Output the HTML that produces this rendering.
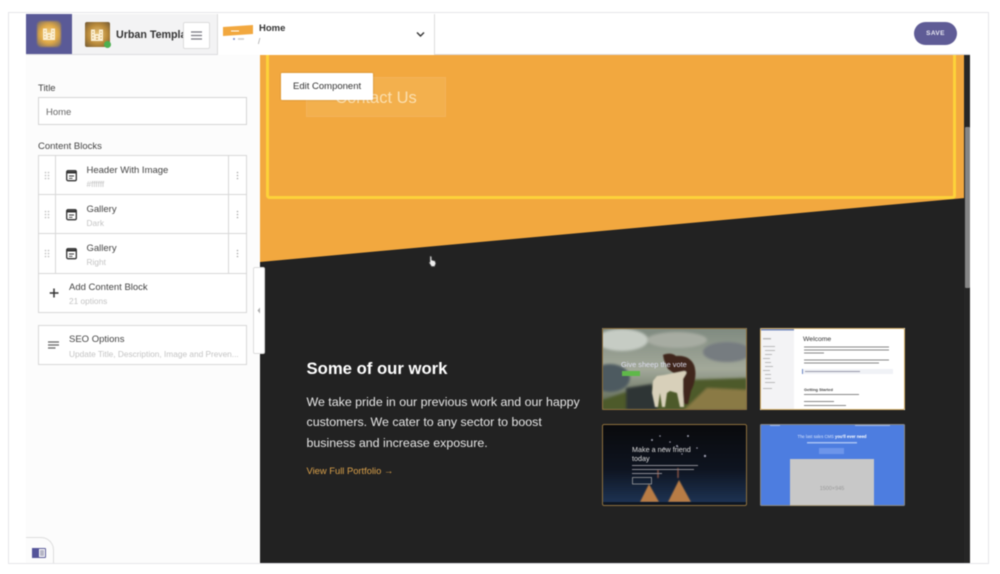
<!DOCTYPE html>
<html><head><meta charset="utf-8">
<style>
*{box-sizing:border-box}
html,body{margin:0;padding:0;width:1000px;height:574px;overflow:hidden;background:#fff;font-family:"Liberation Sans",sans-serif;color:#333}
.a{position:absolute}
.t{position:absolute;white-space:nowrap}
.sub{color:#c4c4c4;font-size:8.3px;margin-top:.5px}
.lab{color:#444;font-size:9.5px;margin-top:.7px}
.row{position:absolute;background:#fff;border:1px solid #d8d8d8}
</style></head><body>
<div class="a" style="left:0;top:0;width:1000px;height:574px;filter:blur(.4px)">
<!-- frame -->
<div class="a" style="left:8px;top:12px;width:981px;height:552px;border:1.500px solid #e6e6ea;background:#fff"></div>
<!-- sidebar -->
<div class="a" style="left:26px;top:55px;width:234px;height:508px;background:#fcfcfc"></div>
<!-- topbar -->
<div class="a" style="left:72px;top:14px;width:146px;height:41px;background:#f3f3f4"></div>
<div class="a" style="left:26px;top:14px;width:46px;height:41px;background:#5a5a97"></div>
<div class="a" style="left:26px;top:54px;width:944px;height:1px;background:#dcdce0"></div>
<div class="a" style="left:37px;top:21px;width:24px;height:26px;background:radial-gradient(circle,#f3d592 0,#e0a946 50%,#8f7a60 85%,#5a5a97 100%);border-radius:4px;filter:blur(.8px)"></div>
<svg class="a" style="left:42px;top:27px" width="15" height="14" viewBox="0 0 15 14"><path d="M1 13V1.500h4V6h4V1.500h4V13z" fill="#fbeed0"/><path d="M2.500 4h1M2.500 7h1M2.500 10h1M10.500 4h1M10.500 7h1M10.500 10h1M6 8.500h2M6 11h2" stroke="#d8a850" stroke-width="1"/></svg>
<div class="a" style="left:85px;top:22px;width:25px;height:25px;background:radial-gradient(circle,#ecc97f 0,#b98a3a 55%,#6f5836 100%);border-radius:2px"></div>
<svg class="a" style="left:90px;top:28px" width="15" height="14" viewBox="0 0 15 14"><path d="M1 13V1.500h4V6h4V1.500h4V13z" fill="#fbeed0"/><path d="M2.500 4h1M2.500 7h1M2.500 10h1M10.500 4h1M10.500 7h1M10.500 10h1M6 8.500h2M6 11h2" stroke="#c49440" stroke-width="1"/></svg>
<div class="a" style="left:104px;top:41px;width:7px;height:7px;border-radius:50%;background:#4caf50"></div>
<div class="t" style="left:116px;top:28px;width:68px;overflow:hidden;font-size:10.700px;font-weight:bold;color:#333;line-height:14px">Urban Template</div>
<div class="a" style="left:183px;top:22px;width:27px;height:27px;background:#fff;border:1px solid #ddd;border-radius:2px"></div>
<svg class="a" style="left:191px;top:31px" width="12" height="10"><path d="M0 1h11M0 4.500h11M0 8h11" stroke="#77777f" stroke-width="1.300"/></svg>
<div class="a" style="left:217px;top:14px;width:218px;height:41px;background:#fff;border-left:1px solid #ddd;border-right:1px solid #ddd"></div>
<svg class="a" style="left:223px;top:25px" width="31" height="17"><path d="M0 2L30 0V9L0 11z" fill="#f2a83f"/><path d="M8 6h8" stroke="#fff" stroke-width="1"/><circle cx="11" cy="14" r="1" fill="#7a8cc8"/><path d="M15 14h6" stroke="#ccc" stroke-width="1.500"/></svg>
<div class="t" style="left:259px;top:23px;font-size:9.500px;font-weight:bold;color:#333;line-height:12px">Home</div>
<div class="t" style="left:258px;top:37px;font-size:8px;color:#999;line-height:10px">/</div>
<svg class="a" style="left:416px;top:31px" width="9" height="7"><path d="M1 1.500l3.500 3.500L8 1.500" stroke="#333" stroke-width="1.400" fill="none"/></svg>
<div class="a" style="left:914px;top:22px;width:43px;height:23px;background:#5f5c96;border-radius:12px"></div>
<div class="t" style="left:914px;top:22px;width:43px;text-align:center;font-size:6.5px;font-weight:bold;color:#e8e8f2;line-height:23px;letter-spacing:.4px">SAVE</div>

<!-- form -->
<div class="t lab" style="left:38px;top:82px;line-height:12px">Title</div>
<div class="a" style="left:38px;top:97px;width:209px;height:28px;background:#fff;border:1px solid #d5d5d5"></div>
<div class="t lab" style="left:46px;top:106px;line-height:12px;color:#666">Home</div>
<div class="t lab" style="left:38px;top:140px;line-height:12px">Content Blocks</div>

<div class="row" style="left:38px;top:155px;width:209px;height:40px"></div>
<div class="row" style="left:38px;top:194px;width:209px;height:40px"></div>
<div class="row" style="left:38px;top:233px;width:209px;height:41px"></div>
<div class="a" style="left:55px;top:155px;width:1px;height:118px;background:#d8d8d8"></div>
<div class="a" style="left:228px;top:155px;width:1px;height:118px;background:#d8d8d8"></div>
<div class="row" style="left:38px;top:273px;width:209px;height:40px"></div>

<svg class="a" style="left:44px;top:171px" width="7" height="90" fill="#bbb"><g><circle cx="1.500" cy="1.500" r=".8"/><circle cx="4.500" cy="1.500" r=".8"/><circle cx="1.500" cy="4.500" r=".8"/><circle cx="4.500" cy="4.500" r=".8"/><circle cx="1.500" cy="7.500" r=".8"/><circle cx="4.500" cy="7.500" r=".8"/></g><g transform="translate(0,39)"><circle cx="1.500" cy="1.500" r=".8"/><circle cx="4.500" cy="1.500" r=".8"/><circle cx="1.500" cy="4.500" r=".8"/><circle cx="4.500" cy="4.500" r=".8"/><circle cx="1.500" cy="7.500" r=".8"/><circle cx="4.500" cy="7.500" r=".8"/></g><g transform="translate(0,78)"><circle cx="1.500" cy="1.500" r=".8"/><circle cx="4.500" cy="1.500" r=".8"/><circle cx="1.500" cy="4.500" r=".8"/><circle cx="4.500" cy="4.500" r=".8"/><circle cx="1.500" cy="7.500" r=".8"/><circle cx="4.500" cy="7.500" r=".8"/></g></svg>
<svg class="a" style="left:236px;top:171px" width="3" height="90" fill="#aaa"><circle cx="1.500" cy="1.500" r=".8"/><circle cx="1.500" cy="4.500" r=".8"/><circle cx="1.500" cy="7.500" r=".8"/><circle cx="1.500" cy="40.500" r=".8"/><circle cx="1.500" cy="43.500" r=".8"/><circle cx="1.500" cy="46.500" r=".8"/><circle cx="1.500" cy="79.500" r=".8"/><circle cx="1.500" cy="82.500" r=".8"/><circle cx="1.500" cy="85.500" r=".8"/></svg>
<svg class="a" style="left:66px;top:170px" width="11" height="90" fill="none" stroke="#333" stroke-width="1.300"><g><rect x=".7" y=".7" width="9.600" height="10" rx="1.300"/><path d="M1 2.500h9" stroke-width="2"/><path d="M3 6h5M3 8.300h3.500" stroke-width=".9"/></g><g transform="translate(0,39)"><rect x=".7" y=".7" width="9.600" height="10" rx="1.300"/><path d="M1 2.500h9" stroke-width="2"/><path d="M3 6h5M3 8.300h3.500" stroke-width=".9"/></g><g transform="translate(0,78)"><rect x=".7" y=".7" width="9.600" height="10" rx="1.300"/><path d="M1 2.500h9" stroke-width="2"/><path d="M3 6h5M3 8.300h3.500" stroke-width=".9"/></g></svg>

<div class="t lab" style="left:86.500px;top:164px;line-height:12px">Header With Image</div>
<div class="t sub" style="left:86.500px;top:178px;line-height:11px">#ffffff</div>
<div class="t lab" style="left:86.500px;top:203px;line-height:12px">Gallery</div>
<div class="t sub" style="left:86.500px;top:217px;line-height:11px">Dark</div>
<div class="t lab" style="left:86.500px;top:242px;line-height:12px">Gallery</div>
<div class="t sub" style="left:86.500px;top:256px;line-height:11px">Right</div>
<svg class="a" style="left:49px;top:288px" width="11" height="11"><path d="M5 .5v9M.7 5h8.800" stroke="#333" stroke-width="1.500"/></svg>
<div class="t lab" style="left:69px;top:281px;line-height:12px">Add Content Block</div>
<div class="t sub" style="left:69px;top:295px;line-height:11px">21 options</div>

<div class="row" style="left:38px;top:325px;width:209px;height:40px"></div>
<svg class="a" style="left:48px;top:341px" width="12" height="9"><path d="M0 1h11M0 4h11M0 7h7.500" stroke="#666" stroke-width="1.300"/></svg>
<div class="t lab" style="left:69px;top:333px;line-height:12px">SEO Options</div>
<div class="t sub" style="left:69px;top:348px;line-height:11px">Update Title, Description, Image and Preven...</div>

<!-- bottom-left toggle -->
<div class="a" style="left:26px;top:537px;width:28px;height:26px;border-top:1px solid #ddd;border-right:1px solid #ddd;border-top-right-radius:13px"></div>
<div class="a" style="left:32px;top:548px;width:14px;height:10px;background:#fff;border:1px solid #5a5a97;border-radius:1px"></div>
<div class="a" style="left:32px;top:548px;width:7px;height:10px;background:#55559a"></div>
<div class="a" style="left:40px;top:550px;width:4px;height:6px;background:#b5b5c5"></div>

<!-- main canvas -->
<svg class="a" style="left:260px;top:55px" width="710" height="508" viewBox="0 0 710 508">
<rect width="710" height="508" fill="#222"/>
<path d="M0 0H705V143L0 207z" fill="#f2a83f"/>
<rect x="7.500" y="-5" width="687" height="147.500" rx="2" fill="none" stroke="#fdd23a" stroke-width="3"/>
<rect x="704" y="0" width="6" height="508" fill="#262626"/>
<rect x="705" y="72" width="5" height="161" rx="1" fill="#858585"/>
</svg>
<div class="a" style="left:306px;top:77px;width:140px;height:40px;background:#f3b04d;border:1px solid #f4b35a"></div>
<div class="t" style="left:306px;top:78px;width:140px;text-align:center;line-height:40px;font-size:16.500px;color:#fbdfae">Contact Us</div>
<div class="a" style="left:281px;top:73px;width:92px;height:27px;background:#fff;border-radius:1px;box-shadow:0 0 2px rgba(0,0,0,.2)"></div>
<div class="t" style="left:293px;top:80px;font-size:9.500px;line-height:13px;color:#333">Edit Component</div>

<!-- collapse tab -->
<div class="a" style="left:253px;top:267px;width:12px;height:87px;background:#fff;border:1px solid #ddd;border-radius:2px"></div>
<svg class="a" style="left:257px;top:307px" width="4" height="7"><path d="M3 .5L.5 3.500 3 6.500z" fill="#aaa"/></svg>

<!-- cursor -->
<svg class="a" style="left:428px;top:255px" width="9" height="13"><path d="M2 1.500c1-.8 1.600 0 1.600 1v2.500l3.400 1 .8 2.500-1.200 3H3.500L1 7.500l1 -.5V1.500z" fill="#eee" stroke="#555" stroke-width=".7"/></svg>

<!-- text -->
<div class="t" style="left:306.500px;top:359px;font-size:16.700px;font-weight:bold;line-height:20px;color:#fff">Some of our work</div>
<div class="t" style="left:306.500px;top:391.500px;font-size:12.400px;line-height:20.700px;color:#e6e6e6">We take pride in our previous work and our happy<br>customers. We cater to any sector to boost<br>business and increase exposure.</div>
<div class="t" style="left:306.500px;top:463.500px;font-size:9.400px;line-height:13px;color:#d9a04a">View Full Portfolio →</div>

<!-- thumbs -->
<svg class="a" style="left:602px;top:328px" width="145" height="82" viewBox="0 0 145 82">
<defs><linearGradient id="sky" x1="0" y1="0" x2="0" y2="1"><stop offset="0" stop-color="#7f8a80"/><stop offset=".5" stop-color="#a3a99a"/><stop offset="1" stop-color="#55604c"/></linearGradient><filter id="b1"><feGaussianBlur stdDeviation="1.200"/></filter><filter id="b2"><feGaussianBlur stdDeviation=".5"/></filter></defs>
<rect width="145" height="82" fill="url(#sky)"/>
<g filter="url(#b1)">
<ellipse cx="20" cy="12" rx="26" ry="11" fill="#c6ccc4"/>
<ellipse cx="75" cy="12" rx="30" ry="8" fill="#a7aca2"/>
<ellipse cx="125" cy="24" rx="24" ry="10" fill="#767c80"/>
<ellipse cx="8" cy="50" rx="20" ry="14" fill="#4e5a60"/>
<path d="M0 72L30 62 85 52 145 50V82H0z" fill="#4d5a2c"/>
<path d="M24 82V60L50 56 56 82z" fill="#2f3634"/>
<path d="M82 82L105 60 145 62V82z" fill="#8a7a45"/>
</g>
<g filter="url(#b2)">
<path d="M61 27c4-2 10-2 13 1 8-1 15 2 18 9 3 8 1 18-3 26l-3 13-4 0-3-16-6-14-7-5-4-9z" fill="#3f261c"/>
<path d="M72 45l10-2c2 0 3 1 2 3l-3 5 0 12 1 16h-4l-3-14-7-2-3 2-2 14h-3l-2-14-2 14h-3l-3-14 1-12 4-5 7-1z" fill="#d8d0ba"/>
</g>
<text x="19" y="39" font-size="7.400" fill="#dde" font-family="Liberation Sans">Give sheep the vote</text>
<rect x="20" y="43" width="18" height="5" fill="#5fb84a"/>
<rect x=".5" y=".5" width="144" height="81" rx="1.500" fill="none" stroke="#8c6f3d"/>
</svg>
<svg class="a" style="left:760px;top:328px" width="145" height="82" viewBox="0 0 145 82">
<rect width="145" height="82" fill="#fff"/>
<rect width="34" height="82" fill="#f3f3f5"/>
<rect width="34" height="2.500" fill="#7088c0"/>
<g fill="#bbb"><rect x="3" y="10" width="8" height="1.500"/><rect x="3" y="18" width="12" height="1"/><rect x="5" y="22" width="10" height="1"/><rect x="5" y="26" width="7" height="1"/><rect x="3" y="30" width="7" height="1"/><rect x="5" y="34" width="6" height="1"/><rect x="5" y="38" width="8" height="1"/><rect x="3" y="42" width="7" height="1"/><rect x="5" y="46" width="6" height="1"/><rect x="5" y="50" width="6" height="1"/><rect x="5" y="54" width="10" height="1"/><rect x="3" y="60" width="9" height="1"/></g>
<text x="43" y="13" font-size="6.800" fill="#333" font-family="Liberation Sans">Welcome</text>
<g fill="#888"><rect x="44" y="18.500" width="85" height="1"/><rect x="44" y="21.500" width="85" height="1"/><rect x="44" y="24.500" width="20" height="1"/><rect x="44" y="31.500" width="85" height="1"/><rect x="44" y="34.500" width="75" height="1"/></g>
<rect x="42" y="41" width="91" height="5" fill="#f0f2f6"/><rect x="42" y="41" width="1" height="5" fill="#6b86c4"/><rect x="45" y="43" width="55" height="1" fill="#99a"/>
<text x="44" y="63" font-size="4" font-weight="bold" fill="#444" font-family="Liberation Sans">Getting Started</text>
<g fill="#888"><rect x="44" y="66" width="55" height="1"/><rect x="44" y="73" width="30" height="1"/><rect x="44" y="77" width="42" height="1"/></g>
<rect x=".5" y=".5" width="144" height="81" rx="1.500" fill="none" stroke="#d9b36a"/>
</svg>
<svg class="a" style="left:602px;top:424px" width="145" height="82" viewBox="0 0 145 82">
<defs><linearGradient id="nt" x1="0" y1="0" x2="0" y2="1"><stop offset="0" stop-color="#0a0a0c"/><stop offset=".55" stop-color="#0e1420"/><stop offset="1" stop-color="#1f3658"/></linearGradient></defs>
<rect width="145" height="82" fill="url(#nt)"/>
<g fill="#99a"><circle cx="50" cy="16" r="1"/><circle cx="58" cy="12" r=".8"/><circle cx="75" cy="22" r="1"/><circle cx="103" cy="32" r="1.200"/><circle cx="86" cy="12" r="1"/><circle cx="68" cy="18" r=".8"/><circle cx="95" cy="24" r=".8"/><circle cx="62" cy="24" r=".8"/><circle cx="80" cy="30" r=".7"/></g>
<g filter="url(#b2)"><path d="M38 78L47 60 57 78zM66 78L77 56 89 78z" fill="#b87c44"/>
<path d="M56 46v8M76 44v10" stroke="#b86a50" stroke-width="1"/></g>
<path d="M0 82V78H145V82z" fill="#0e1622"/>
<text x="30" y="28" font-size="7.200" fill="#ddd" font-family="Liberation Sans">Make a new friend</text>
<text x="30" y="37" font-size="7.200" fill="#ddd" font-family="Liberation Sans">today</text>
<g fill="#8a8a92"><rect x="30" y="41" width="66" height="1"/><rect x="30" y="45" width="62" height="1"/><rect x="30" y="49" width="30" height="1"/></g>
<rect x="30.500" y="53.500" width="19" height="6.500" fill="none" stroke="#aaa" stroke-width=".7"/>
<rect x=".5" y=".5" width="144" height="81" rx="1.500" fill="none" stroke="#8c6f3d"/>
</svg>
<svg class="a" style="left:760px;top:424px" width="145" height="82" viewBox="0 0 145 82">
<rect width="145" height="82" rx="1.500" fill="#4d7de0"/>
<path d="M10 1.500h10M95 1.500h35" stroke="#9db8ef" stroke-width="1"/>
<text x="72" y="14" font-size="4.200" text-anchor="middle" fill="#d5e1fb" font-family="Liberation Sans">The last sales CMS <tspan font-weight="bold" fill="#fff">you'll ever need</tspan></text>
<rect x="47" y="18" width="50" height="1.500" fill="#a6c0f2"/>
<rect x="59" y="24" width="25" height="6" fill="#6d95ea"/>
<rect x="30" y="35" width="84" height="47" fill="#c8c8c8"/>
<text x="72" y="66" font-size="5.500" text-anchor="middle" fill="#999" font-family="Liberation Sans">1500×945</text>
<rect x=".5" y=".5" width="144" height="81" rx="1.500" fill="none" stroke="#a08a5a" stroke-opacity=".7"/>
</svg>
</div>
</body></html>
